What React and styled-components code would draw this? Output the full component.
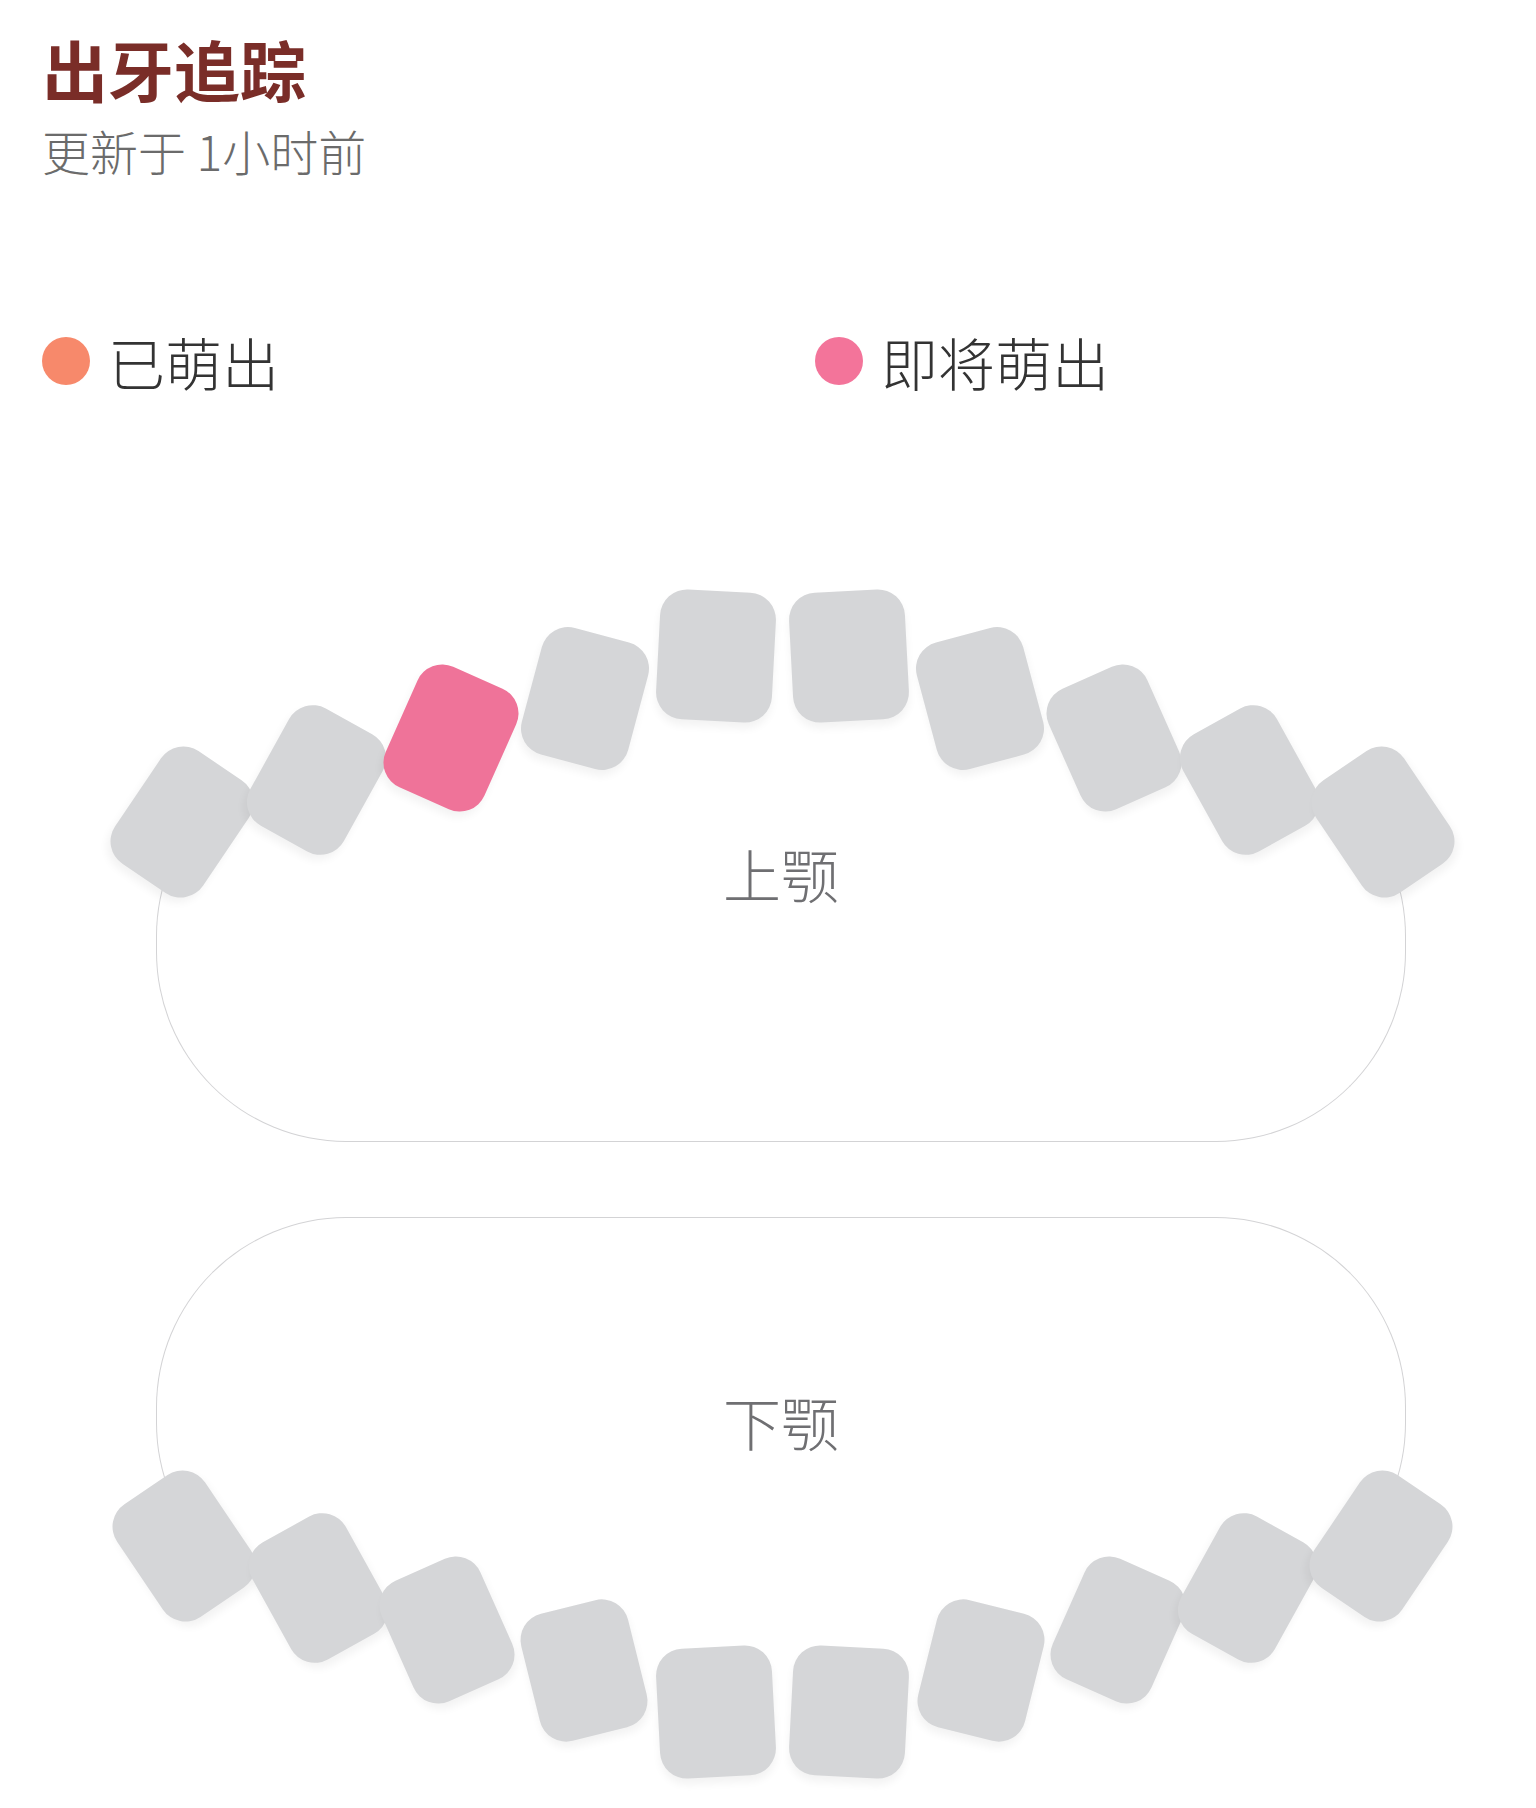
import React from "react";
import styled, { createGlobalStyle } from "styled-components";

const GlobalStyle = createGlobalStyle`
  html, body {
    margin: 0;
    padding: 0;
    background: #ffffff;
  }
  body {
    font-family: "Noto Sans CJK SC", "Noto Sans", sans-serif;
  }
`;

const Page = styled.main`
  width: 1536px;
  min-height: 1808px;
  box-sizing: border-box;
  padding: 35px 16px 0 42px;
  background: #ffffff;
  overflow: hidden;
`;

const Header = styled.header`
  display: flex;
  flex-direction: column;
  gap: 25px;
`;

const Title = styled.h1`
  margin: 0;
  font-size: 66px;
  line-height: 1;
  font-weight: 700;
  color: #7a2d28;
  letter-spacing: 0;
`;

const Subtitle = styled.p`
  margin: 0;
  font-size: 48px;
  line-height: 1;
  font-weight: 300;
  color: #6b6b6b;
`;

const Legend = styled.ul`
  list-style: none;
  margin: 159px 0 0;
  padding: 0;
  display: grid;
  grid-template-columns: 773px 1fr;
`;

const LegendItem = styled.li`
  display: flex;
  align-items: center;
  gap: 18px;
  height: 56px;
`;

const Dot = styled.span`
  width: 48px;
  height: 48px;
  border-radius: 50%;
  background: ${(p) => p.$color};
  flex: none;
`;

const LegendText = styled.span`
  font-size: 57px;
  line-height: 1;
  font-weight: 300;
  color: #333333;
`;

const Chart = styled.section`
  margin: 357px 0 0 114px;
  display: flex;
  flex-direction: column;
  gap: 75px;
`;

const Jaw = styled.div`
  position: relative;
  width: 1250px;
  height: 396px;
  box-sizing: border-box;
  border: 1px solid #d3d3d5;
  border-radius: 190px;
  ${(p) =>
    p.$side === "upper"
      ? "border-top-color: transparent;"
      : "border-bottom-color: transparent;"}
  padding-top: ${(p) => p.$labelTop}px;
  display: flex;
  flex-direction: column;
  align-items: center;
`;

const JawLabel = styled.span`
  font-size: 58px;
  line-height: 1;
  font-weight: 300;
  color: #6f6f72;
`;

const Tooth = styled.div`
  position: absolute;
  left: ${(p) => p.$x - p.$w / 2}px;
  top: ${(p) => p.$y - p.$h / 2}px;
  width: ${(p) => p.$w}px;
  height: ${(p) => p.$h}px;
  border-radius: 27px;
  background: ${(p) => (p.$state === "soon" ? "#ef7399" : p.$state === "done" ? "#f7896b" : "#d5d6d8")};
  box-shadow: 0 6px 9px rgba(0, 0, 0, 0.05);
  transform: rotate(${(p) => p.$rot}deg);
`;

// Left half of an arch, from the back molar to the central incisor.
// x/y are tooth centres relative to the jaw outline, rot in degrees.
const HALF_UPPER = [
  { x: 25, y: 75, rot: 34, w: 106, h: 136 },
  { x: 159, y: 33, rot: 29, w: 107, h: 134 },
  { x: 294, y: -9, rot: 24, w: 108, h: 132 },
  { x: 428, y: -49, rot: 15, w: 110, h: 131 },
  { x: 559, y: -91, rot: 3, w: 116, h: 130 },
];

const HALF_LOWER = [
  { x: 27, y: 328, rot: -34, w: 106, h: 136 },
  { x: 161, y: 370, rot: -29, w: 107, h: 134 },
  { x: 290, y: 412, rot: -24, w: 108, h: 132 },
  { x: 427, y: 452, rot: -14, w: 110, h: 131 },
  { x: 559, y: 494, rot: -3, w: 116, h: 130 },
];

const CENTER = 625.5;

const mirror = (half) => [
  ...half,
  ...half
    .slice()
    .reverse()
    .map((t) => ({ ...t, x: 2 * CENTER - t.x, rot: -t.rot })),
];

const UPPER = mirror(HALF_UPPER).map((t, i) => ({ ...t, state: i === 2 ? "soon" : "none" }));
const LOWER = mirror(HALF_LOWER).map((t) => ({ ...t, state: "none" }));

const Arch = ({ side, label, labelTop, teeth }) => (
  <Jaw $side={side} $labelTop={labelTop}>
    <JawLabel>{label}</JawLabel>
    {teeth.map((t, i) => (
      <Tooth
        key={i}
        $x={t.x}
        $y={t.y}
        $w={t.w}
        $h={t.h}
        $rot={t.rot}
        $state={t.state}
      />
    ))}
  </Jaw>
);

export default function App() {
  return (
    <>
      <GlobalStyle />
      <Page>
        <Header>
          <Title>出牙追踪</Title>
          <Subtitle>更新于 1小时前</Subtitle>
        </Header>
        <Legend>
          <LegendItem>
            <Dot $color="#f7896b" />
            <LegendText>已萌出</LegendText>
          </LegendItem>
          <LegendItem>
            <Dot $color="#f3749a" />
            <LegendText>即将萌出</LegendText>
          </LegendItem>
        </Legend>
        <Chart>
          <Arch side="upper" label="上颚" labelTop={97} teeth={UPPER} />
          <Arch side="lower" label="下颚" labelTop={174} teeth={LOWER} />
        </Chart>
      </Page>
    </>
  );
}
